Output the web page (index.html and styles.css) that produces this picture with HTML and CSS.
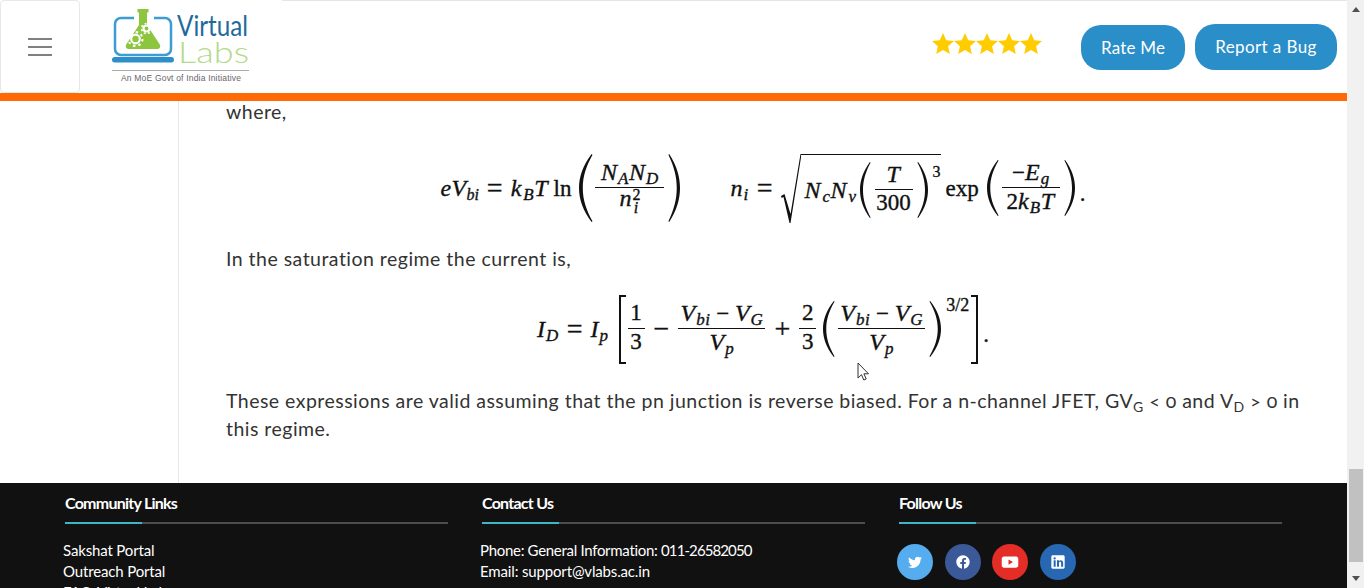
FILE: index.html
```html
<!DOCTYPE html>
<html lang="en">
<head>
<meta charset="utf-8">
<title>Virtual Labs</title>
<link rel="stylesheet" href="styles.css">
</head>
<body>
<svg class="defs" width="0" height="0" aria-hidden="true">
  <defs>
    <symbol id="lp" viewBox="0 0 14 70" preserveAspectRatio="none"><path d="M12.6 0C4 12 0 23 0 35s4 23 12.6 35l.9-.7C7 57 3.800 47 3.800 35S7 13 13.500.7z"/></symbol>
    <symbol id="rp" viewBox="0 0 14 70" preserveAspectRatio="none"><path d="M1.400 0C10 12 14 23 14 35s-4 23-12.600 35l-.9-.7C7 57 10.200 47 10.200 35S7 13 .5.7z"/></symbol>
    <symbol id="star" viewBox="0 0 22 22"><path d="M11 0l3.200 7.300 7.800.8-5.900 5.200 1.700 7.700L11 17.100 4.200 21l1.700-7.700L0 8.100l7.800-.8z"/></symbol>
  </defs>
</svg>
<div class="app">
  <div class="page">
    <header class="header">
      <div class="burger"><span></span><span></span><span></span></div>
      <div class="logo">
        <svg class="logo-svg" width="150" height="88" viewBox="0 0 150 88">
          <rect class="l-screen" x="5" y="18" width="56" height="37" rx="6"/>
          <rect class="l-gap" x="24" y="10" width="20" height="10"/>
          <path class="l-flask" d="M27.500 9h11v3.500h-1.500V25l12.500 19c1.800 2.800.3 5-2.500 5H19c-2.800 0-4.300-2.200-2.500-5L29 25V12.500h-1.500z"/>
          <circle class="l-gear-t" cx="25.500" cy="39" r="7"/>
          <circle class="l-gear" cx="25.500" cy="39" r="4.300"/>
          <circle class="l-gear-t2" cx="36.500" cy="28.500" r="5"/>
          <circle class="l-gear" cx="36.500" cy="28.500" r="3"/>
          <rect class="l-base" x="2" y="57" width="62" height="5.500" rx="2.700"/>
          <text class="l-virtual" x="67" y="36" textLength="71" lengthAdjust="spacingAndGlyphs">Virtual</text>
          <text class="l-labs" x="68" y="63" textLength="71" lengthAdjust="spacingAndGlyphs">Labs</text>
          <rect class="l-rule" x="2" y="70" width="137" height="1"/>
          <text class="l-tag" x="11" y="81" textLength="120">An MoE Govt of India Initiative</text>
        </svg>
      </div>
      <div class="actions">
        <div class="stars">
          <svg class="star"><use href="#star"/></svg><svg class="star"><use href="#star"/></svg><svg class="star"><use href="#star"/></svg><svg class="star"><use href="#star"/></svg><svg class="star"><use href="#star"/></svg>
        </div>
        <a class="btn btn-rate">Rate Me</a>
        <a class="btn btn-bug">Report a Bug</a>
      </div>
    </header>
    <div class="accent"></div>
    <main class="main">
      <aside class="side"></aside>
      <article class="content">
        <p class="first">where,</p>
        <div class="formula f1">
          <span class="m m-tight"><i>eV</i><sub><i>bi</i></sub></span><span class="op">=</span>
          <span class="m m-wide"><i>k</i><sub><i>B</i></sub><i>T</i></span><span class="fn ln">ln</span>
          <svg class="paren"><use href="#lp"/></svg>
          <span class="frac fw-a"><span class="num"><i>N</i><sub><i>A</i></sub><i>N</i><sub><i>D</i></sub></span><span class="den den-n"><i>n</i><span class="stack"><span>2</span><span><i>i</i></span></span></span></span>
          <svg class="paren p-close"><use href="#rp"/></svg>
          <span class="quad"></span>
          <span class="m"><i>n</i><sub><i>i</i></sub></span><span class="op">=</span>
          <span class="sqrt">
            <svg class="radical" viewBox="0 0 20 69" preserveAspectRatio="none"><path d="M0 42l3.500-2 6 20L19.500 0H21v1.500h-.7L9.500 69h-1L2.500 43 .6 44z"/></svg>
            <span class="radicand">
              <span class="m m-wide"><i>N</i><sub><i>c</i></sub><i>N</i><sub><i>v</i></sub></span>
              <svg class="paren p-mid"><use href="#lp"/></svg>
              <span class="frac fw-b"><span class="num"><i>T</i></span><span class="den">300</span></span>
              <svg class="paren p-mid"><use href="#rp"/></svg>
              <span class="power">3</span>
            </span>
          </span>
          <span class="fn exp">exp</span>
          <svg class="paren p-mid p-exp"><use href="#lp"/></svg>
          <span class="frac fw-c"><span class="num">&minus;<i>E</i><sub><i>g</i></sub></span><span class="den">2<i>k</i><sub><i>B</i></sub><i>T</i></span></span>
          <svg class="paren p-mid"><use href="#rp"/></svg><span class="dot">.</span>
        </div>
        <p>In the saturation regime the current is,</p>
        <div class="formula f2">
          <span class="m"><i>I</i><sub><i>D</i></sub></span><span class="op">=</span>
          <span class="m"><i>I</i><sub><i>p</i></sub></span>
          <span class="bracket bl"></span>
          <span class="frac fw-d"><span class="num">1</span><span class="den">3</span></span>
          <span class="op op-wide">&minus;</span>
          <span class="frac fw-e"><span class="num"><i>V</i><sub><i>bi</i></sub> &minus; <i>V</i><sub><i>G</i></sub></span><span class="den"><i>V</i><sub><i>p</i></sub></span></span>
          <span class="op op-wide">+</span>
          <span class="frac fw-d"><span class="num">2</span><span class="den">3</span></span>
          <svg class="paren p-mid p-f2 p-f2l"><use href="#lp"/></svg>
          <span class="frac fw-e"><span class="num"><i>V</i><sub><i>bi</i></sub> &minus; <i>V</i><sub><i>G</i></sub></span><span class="den"><i>V</i><sub><i>p</i></sub></span></span>
          <svg class="paren p-mid p-f2"><use href="#rp"/></svg>
          <span class="power power-b">3/2</span>
          <span class="bracket br"></span><span class="dot">.</span>
        </div>
        <p>These expressions are valid assuming that the pn junction is reverse biased. For a n-channel JFET, GV<sub class="low">G</sub> &lt; 0 and V<sub class="low">D</sub> &gt; 0 in this regime.</p>
      </article>
    </main>
    <footer class="footer">
      <section class="col">
        <h3>Community Links</h3>
        <div class="rule"><span></span></div>
        <ul class="links"><li>Sakshat Portal</li><li>Outreach Portal</li><li>FAQ-Virtual Labs</li></ul>
      </section>
      <section class="col">
        <h3>Contact Us</h3>
        <div class="rule"><span></span></div>
        <ul class="links links-tight"><li>Phone: General Information: <span class="digits">011-26582050</span></li><li>Email: support@vlabs.ac.in</li></ul>
      </section>
      <section class="col">
        <h3>Follow Us</h3>
        <div class="rule"><span></span></div>
        <div class="social">
          <a class="soc tw"><svg viewBox="0 0 24 24"><path d="M22.460 6c-.77.35-1.600.58-2.460.69.880-.53 1.560-1.370 1.880-2.380-.83.5-1.750.85-2.720 1.050C18.370 4.500 17.260 4 16 4c-2.350 0-4.270 1.920-4.270 4.290 0 .34.04.67.11.98C8.280 9.090 5.110 7.380 3 4.790c-.37.63-.58 1.370-.58 2.150 0 1.490.75 2.810 1.910 3.560-.71 0-1.370-.2-1.950-.5v.03c0 2.080 1.480 3.820 3.440 4.210a4.220 4.220 0 0 1-1.930.07 4.280 4.280 0 0 0 4 2.980 8.521 8.521 0 0 1-5.330 1.840c-.34 0-.68-.02-1.020-.06C3.440 20.290 5.700 21 8.120 21 16 21 20.330 14.460 20.330 8.790c0-.19 0-.37-.01-.56.84-.6 1.560-1.360 2.140-2.230z"/></svg></a>
          <a class="soc fb"><svg viewBox="0 0 24 24"><path d="M12 2.040C6.500 2.040 2 6.530 2 12.060 2 17.060 5.660 21.210 10.440 21.960V14.960H7.900V12.060H10.440V9.850C10.440 7.340 11.930 5.960 14.220 5.960 15.310 5.960 16.450 6.150 16.450 6.150V8.620H15.190C13.950 8.620 13.560 9.390 13.560 10.180V12.060H16.340L15.890 14.960H13.560V21.960A10 10 0 0 0 22 12.060C22 6.530 17.500 2.040 12 2.040Z"/></svg></a>
          <a class="soc yt"><svg viewBox="0 0 24 24"><path fill-rule="evenodd" d="M4 4.500h16c1.700 0 3 1.300 3 3v9c0 1.700-1.300 3-3 3H4c-1.700 0-3-1.300-3-3v-9c0-1.700 1.300-3 3-3zM10 8.500v7l6-3.500z"/></svg></a>
          <a class="soc li"><svg viewBox="0 0 24 24"><path fill-rule="evenodd" d="M4 2h16c1.100 0 2 .9 2 2v16c0 1.100-.9 2-2 2H4c-1.100 0-2-.9-2-2V4c0-1.100.9-2 2-2zM5.500 9.500V19h3V9.500zM7 5a1.700 1.700 0 1 0 0 3.400A1.700 1.700 0 0 0 7 5zM10.500 9.500V19h3v-5c0-1.300.6-2.200 1.700-2.200s1.500.9 1.500 2.200v5h3v-5.600c0-2.700-1.400-4.100-3.500-4.100-1.300 0-2.200.6-2.700 1.400V9.500z"/></svg></a>
        </div>
      </section>
    </footer>
  </div>
  <div class="scrollbar">
    <span class="arrow up"></span>
    <span class="thumb"></span>
    <span class="arrow down"></span>
  </div>
  <svg class="cursor" width="14" height="20" viewBox="0 0 14 20"><path d="M1 1v15l3.500-3.300 2.300 5.300 2.400-1-2.300-5.200H11.500z"/></svg>
</div>
</body>
</html>
```
FILE: styles.css
```css
* { box-sizing: border-box; }
html, body { margin: 0; padding: 0; height: 588px; overflow: hidden; background: #fff; }
.defs { position: absolute; }
.app { position: relative; display: flex; width: 1366px; height: 588px; overflow: hidden; font-family: Lato, "Liberation Sans", sans-serif; }
.page { width: 1347px; height: 588px; flex: none; display: flex; flex-direction: column; overflow: hidden; }

/* header */
.header { display: flex; height: 93px; flex: none; background: #fff; }
.burger { width: 80px; height: 93px; border: 1px solid #e8e8e8; border-radius: 4px; display: flex; flex-direction: column; justify-content: center; align-items: center; gap: 6px; }
.burger span { display: block; width: 24px; height: 2px; background: #808080; }
.logo { width: 202px; padding-left: 30px; }
.logo-svg { display: block; overflow: visible; }
.l-screen { fill: none; stroke: #3d9cd2; stroke-width: 2.500; }
.l-gap { fill: #fff; }
.l-flask { fill: #8cc63f; }
.l-gear { fill: none; stroke: #fff; stroke-width: 2.200; }
.l-gear-t { fill: none; stroke: #fff; stroke-width: 2; stroke-dasharray: 2.500 3; }
.l-gear-t2 { fill: none; stroke: #fff; stroke-width: 1.500; stroke-dasharray: 2 2.200; }
.l-base { fill: #2e8fc8; }
.l-virtual { font: 400 28px Lato, sans-serif; fill: #1f6a9c; }
.l-labs { font: 300 29px Lato, sans-serif; fill: #b4d98a; }
.l-rule { fill: #aaa; }
.l-tag { font: 8.500px "Liberation Sans", sans-serif; fill: #666; }
.actions { flex: 1; display: flex; align-items: flex-start; justify-content: flex-end; gap: 10px; padding: 23px 10px 0 0; border-top: 1px solid #e6e6e6; }
.stars { display: flex; margin: 9px 29px 0 0; }
.star { display: block; width: 22px; height: 22px; fill: #ffcc00; }
.btn { display: flex; align-items: center; justify-content: center; background: #2a8ec9; color: #fff; font-size: 17px; border-radius: 20px; letter-spacing: .2px; }
.btn-rate { width: 104px; height: 45px; margin-top: 1px; }
.btn-bug { width: 142px; height: 46px; letter-spacing: .4px; padding-bottom: 2px; }
.accent { height: 8px; flex: none; background: #ff6a07; }

/* main */
.main { flex: 1; display: flex; min-height: 0; overflow: hidden; }
.side { width: 179px; flex: none; border-right: 1px solid #e8e8e8; }
.content { flex: 1; padding: 0 47px; color: #333; font-size: 19.500px; letter-spacing: .475px; line-height: 28px; font-variant-numeric: oldstyle-nums; }
.content p { margin: 0; }
.content .first { height: 24px; line-height: 21px; }
.low { font-size: 14px; line-height: 0; vertical-align: -4px; }

/* math */
.formula { display: flex; justify-content: center; align-items: center; height: 70px; margin: 22px 0; color: #111; font-family: "Liberation Serif", serif; font-size: 23px; letter-spacing: 0; line-height: 1; -webkit-text-stroke: .35px #111; white-space: nowrap; font-variant-numeric: normal; }
.f1 { margin-top: 28px; }
.f2 { margin: 21px 0 23px; }
.formula i { font-style: italic; font-size: 24px; letter-spacing: 1px; }
.formula sub { font-size: 17px; line-height: 0; vertical-align: -4px; }
.formula sub i { font-size: 17px; letter-spacing: .5px; }
.m { display: inline-block; }
.m-tight i { letter-spacing: .3px; }
.m-tight sub i { font-size: 16px; letter-spacing: 0; }
.m-wide i { letter-spacing: 2px; }
.op { font-size: 28px; margin: 0 8px; }
.op-wide { margin: 0 9px; }
.fn { margin-left: 4px; }
.paren { display: block; flex: none; width: 14px; height: 68px; fill: #111; margin: 0 2px 0 8px; }
.frac + .paren { margin: 0 0 0 4px; }
.p-close { width: 12px; }
.p-mid { width: 11px; height: 56px; margin: 0 4px 0 3px; }
.p-exp { width: 12px; margin: 0 3px 0 8px; }
.p-f2 { width: 12px; margin: 0 3px 0 3px; }
.frac + .p-f2l { margin: 0 3px 0 7px; }
.frac { display: block; flex: none; text-align: center; }
.num { display: block; height: 35px; padding-top: 7px; line-height: 24px; border-bottom: 1px solid #111; }
.den { display: block; height: 35px; padding-top: 1px; line-height: 24px; }
.den-n { padding-top: 0; line-height: 20px; }
.fw-a { width: 69px; }
.fw-b { width: 38px; }
.fw-c { width: 58px; }
.fw-d { width: 17px; }
.fw-e { width: 87px; }
.stack { display: inline-flex; flex-direction: column; font-size: 16px; line-height: 13px; vertical-align: 6px; }
.stack i { font-size: 16px !important; }
.quad { width: 50px; }
.sqrt { display: inline-flex; align-items: stretch; height: 69px; margin-left: 1px; }
.radical { display: block; width: 20px; height: 69px; fill: #111; stroke: none; }
.radicand { display: flex; align-items: center; border-top: 1px solid #111; padding: 3px 0 0 3px; }
.power { align-self: flex-start; font-size: 16px; margin: 6px 0 0 5px; }
.exp { margin-left: 5px; }
.dot { align-self: center; padding: 10px 0 0 5px; }
.bracket { display: block; flex: none; width: 7px; height: 69px; border: 2px solid #111; margin: 0 2px 0 10px; }
.bl { border-right: 0; }
.br { border-left: 0; margin: 0 0 0 2px; }
.power-b { margin: 2px 0 0 5px; font-size: 18px; }

/* footer */
.footer { height: 105px; flex: none; overflow: hidden; background: #111; color: #fff; display: grid; grid-template-columns: repeat(3, 383px); column-gap: 34px; padding: 10px 0 0 65px; }
.col h3 { margin: 0; font-size: 16px; line-height: 20px; font-weight: 700; letter-spacing: -.75px; }
.rule { height: 2px; background: #4d4d4d; margin: 9px 0 0; }
.rule span { display: block; width: 77px; height: 2px; background: #3fb6c6; }
.links { list-style: none; margin: 15.500px 0 0 -2px; padding: 0; font-size: 15px; line-height: 21px; letter-spacing: -.15px; }
.links-tight { letter-spacing: -.3px; }
.links-tight li:last-child { letter-spacing: -.15px; }
.digits { letter-spacing: -.9px; }
.social { display: flex; gap: 11.700px; margin: 20px 0 0 -2px; }
.soc { display: flex; align-items: center; justify-content: center; width: 36px; height: 36px; border-radius: 50%; flex: none; }
.soc svg { display: block; width: 16px; height: 16px; fill: #fff; }
.yt svg { width: 18px; height: 18px; }
.tw { background: #55acee; }
.fb { background: #3b5998; }
.yt { background: #e52d27; }
.li { background: #2867b2; }

/* scrollbar */
.scrollbar { position: relative; width: 17px; height: 588px; background: #f1f1f1; flex: none; }
.arrow { position: absolute; left: 5px; width: 0; height: 0; border-left: 4px solid transparent; border-right: 4px solid transparent; }
.up { top: 7px; border-bottom: 5px solid #505050; }
.down { bottom: 7px; border-top: 5px solid #505050; }
.thumb { position: absolute; left: 2px; width: 14px; top: 469px; height: 93px; background: #c1c1c1; }

.cursor { position: absolute; left: 857px; top: 362px; fill: #fff; stroke: #333; stroke-width: 1; }
```
